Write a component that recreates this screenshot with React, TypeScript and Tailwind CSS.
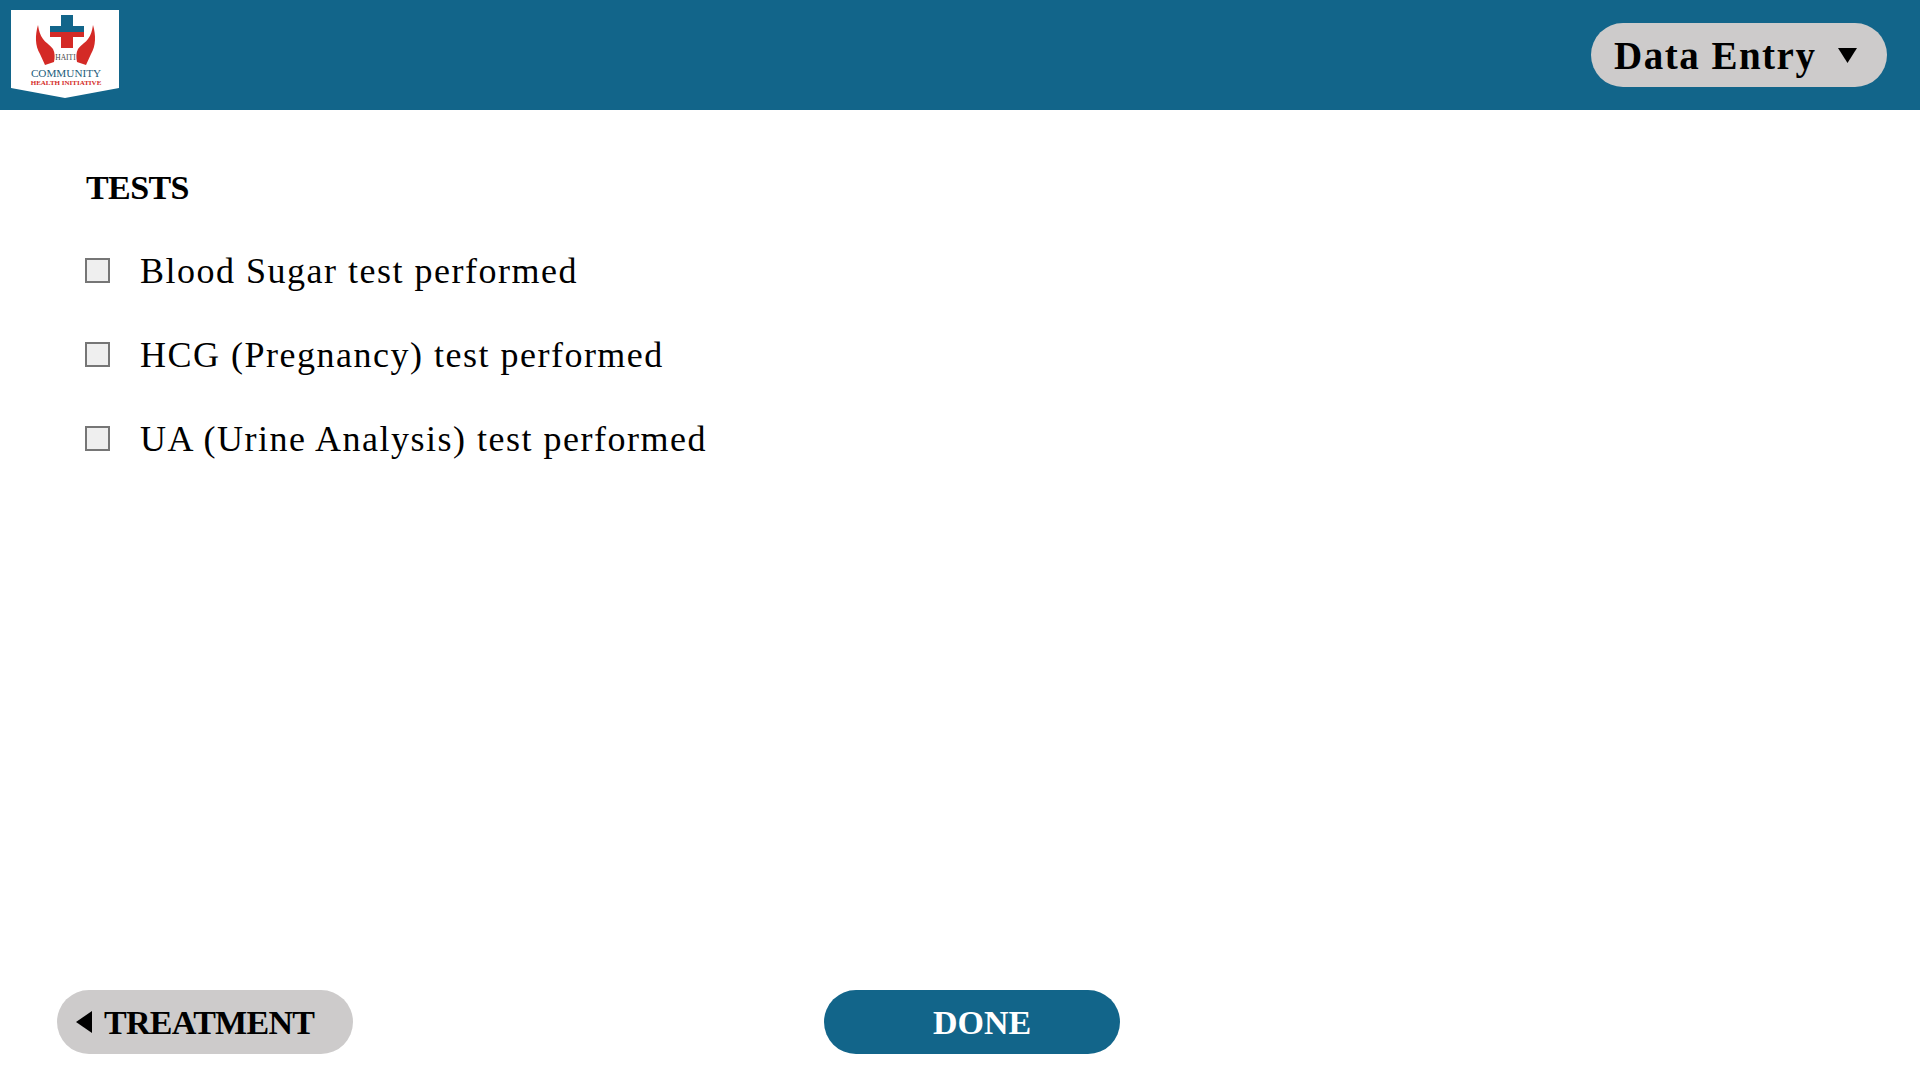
const tests = [
  "Blood Sugar test performed",
  "HCG (Pregnancy) test performed",
  "UA (Urine Analysis) test performed",
];

function Logo() {
  return (
    <svg width="108" height="88" viewBox="0 0 108 88" className="mb-[2px] block">
      <path d="M0 0H108V78L54 88L0 78Z" fill="#ffffff" />
      <path d="M39 16H50V5H62V16H73V22H39Z" fill="#12658a" />
      <path d="M39 22H73V27H62V38H50V27H39Z" fill="#d42a26" />
      <path d="M27 15C24 25 24 36 29 44L34 55L43 52C44 47 44 43 42 39C38 34 34 32 32 29C29 25 28 21 27 15Z" fill="#d42a26" />
      <path d="M82 15C85 25 85 36 80 44L75 55L66 52C65 47 65 43 67 39C71 34 75 32 77 29C80 25 81 21 82 15Z" fill="#d42a26" />
      <text x="54.5" y="50" textAnchor="middle" fontSize="7.5" fontFamily="Liberation Serif, serif" fill="#444">HAITI</text>
      <text x="55" y="67" textAnchor="middle" fontSize="11.2" fontFamily="Liberation Serif, serif" fill="#1d5d7c">COMMUNITY</text>
      <text x="55" y="75" textAnchor="middle" fontSize="7" fontFamily="Liberation Serif, serif" fontWeight="700" fill="#d42a26">HEALTH INITIATIVE</text>
    </svg>
  );
}

export default function App() {
  return (
    <div className="flex h-screen flex-col bg-white font-['Liberation_Serif',serif] text-black">
      <header className="flex h-[110px] shrink-0 items-center justify-between bg-[#12658a] pl-[11px] pr-[33px]">
        <Logo />
        <button className="flex h-16 w-[296px] items-center gap-[22px] rounded-full bg-[#cdcbcb] pl-[23px] text-[39px] font-bold tracking-[1.5px]">
          <span className="pt-[2px]">Data Entry</span>
          <svg width="19" height="15" viewBox="0 0 19 15">
            <path d="M0 0H19L9.5 15Z" fill="#000" />
          </svg>
        </button>
      </header>

      <main className="flex flex-1 flex-col px-[85px] pt-[58px]">
        <h2 className="ml-px text-[34px] leading-[40px] font-bold tracking-[-0.6px]">TESTS</h2>
        <div className="mt-[37px] flex flex-col gap-[34px]">
          {tests.map((t) => (
            <label key={t} className="flex h-[50px] items-center gap-[30px] text-[36px] tracking-[1.5px]">
              <span className="h-[25px] w-[25px] shrink-0 border-2 border-[#767676] bg-[#efefef]" />
              <span className="pt-[2px]">{t}</span>
            </label>
          ))}
        </div>
      </main>

      <footer className="flex h-[90px] shrink-0 items-start pl-[57px]">
        <button className="flex h-16 w-[296px] items-center gap-[12px] rounded-full bg-[#cdcbcb] pl-[19px] text-[34px] font-bold tracking-[-0.7px]">
          <svg width="16" height="22" viewBox="0 0 16 22">
            <path d="M16 0V22L0 11Z" fill="#000" />
          </svg>
          TREATMENT
        </button>
        <button className="ml-[471px] h-16 w-[296px] rounded-full bg-[#12658a] pl-[20px] text-[34px] font-bold text-white">
          DONE
        </button>
      </footer>
    </div>
  );
}
